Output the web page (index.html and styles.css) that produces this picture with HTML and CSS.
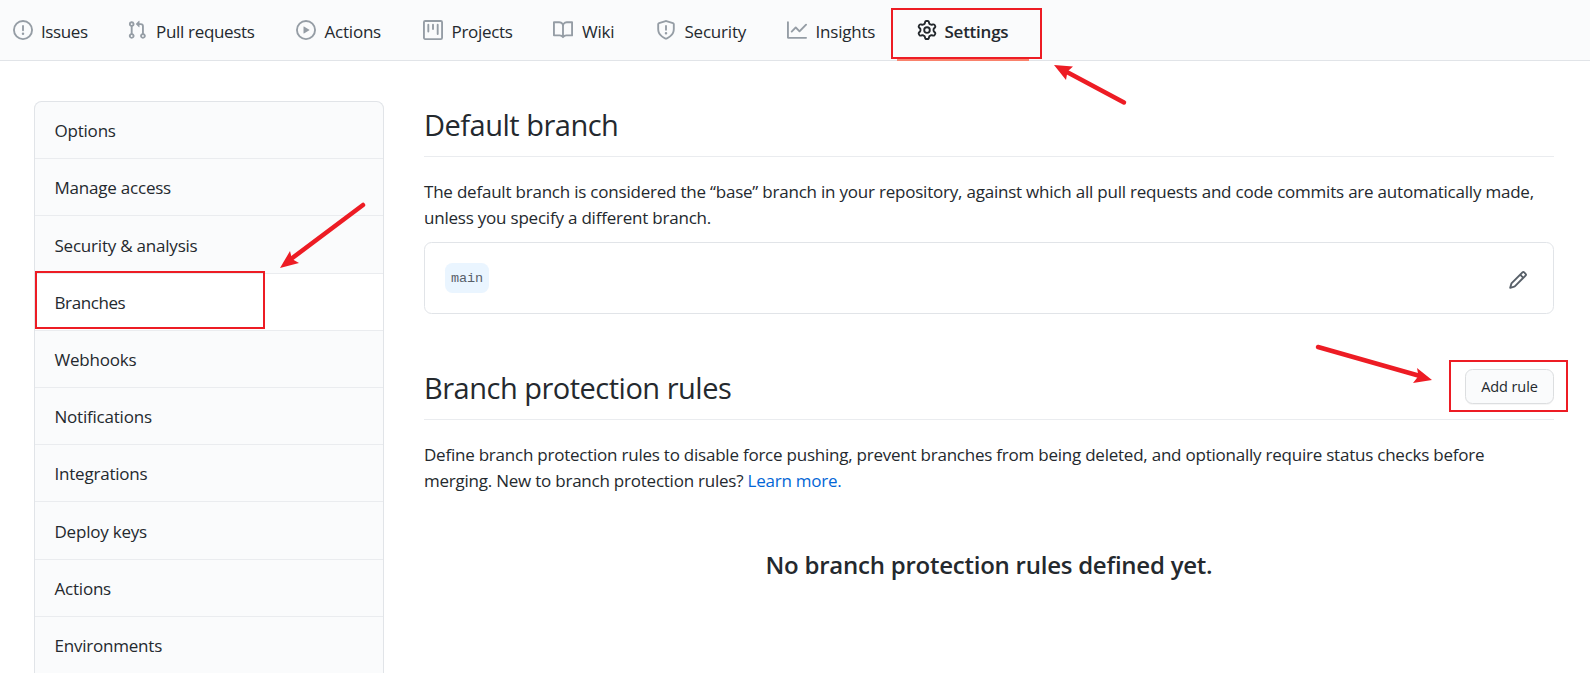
FILE: index.html
```html
<!DOCTYPE html>
<html lang="en">
<head>
<meta charset="utf-8">
<title>Branches settings</title>
<link rel="stylesheet" href="styles.css">
</head>
<body>
<nav class="tabs">
  <a class="tab tab-issues"><svg class="icon" viewBox="0 0 16 16"><path fill-rule="evenodd" d="M8 1.5a6.5 6.5 0 100 13 6.5 6.5 0 000-13zM0 8a8 8 0 1116 0A8 8 0 010 8zm9 3a1 1 0 11-2 0 1 1 0 012 0zm-.25-6.25a.75.75 0 00-1.5 0v3.5a.75.75 0 001.5 0v-3.5z"/></svg><span>Issues</span></a>
  <a class="tab tab-pulls"><svg class="icon" viewBox="0 0 16 16"><path fill-rule="evenodd" d="M7.177 3.073L9.573.677A.25.25 0 0110 .854v4.792a.25.25 0 01-.427.177L7.177 3.427a.25.25 0 010-.354zM3.75 2.5a.75.75 0 100 1.5.75.75 0 000-1.5zm-2.25.75a2.25 2.25 0 113 2.122v5.256a2.251 2.251 0 11-1.5 0V5.372A2.25 2.25 0 011.5 3.25zM11 2.5h-1V4h1a1 1 0 011 1v5.628a2.251 2.251 0 101.5 0V5A2.5 2.5 0 0011 2.5zm1 10.25a.75.75 0 111.5 0 .75.75 0 01-1.5 0zM3.75 12a.75.75 0 100 1.5.75.75 0 000-1.5z"/></svg><span>Pull requests</span></a>
  <a class="tab tab-actions"><svg class="icon" viewBox="0 0 16 16"><path fill-rule="evenodd" d="M1.5 8a6.5 6.5 0 1113 0 6.5 6.5 0 01-13 0zM8 0a8 8 0 100 16A8 8 0 008 0zM6.379 5.227A.25.25 0 006 5.442v5.117a.25.25 0 00.379.214l4.264-2.559a.25.25 0 000-.428L6.379 5.227z"/></svg><span>Actions</span></a>
  <a class="tab tab-projects"><svg class="icon" viewBox="0 0 16 16"><path fill-rule="evenodd" d="M1.75 0A1.75 1.75 0 000 1.75v12.5C0 15.216.784 16 1.75 16h12.5A1.75 1.75 0 0016 14.25V1.75A1.75 1.75 0 0014.25 0H1.75zM1.5 1.75a.25.25 0 01.25-.25h12.5a.25.25 0 01.25.25v12.5a.25.25 0 01-.25.25H1.75a.25.25 0 01-.25-.25V1.75zM11.75 3a.75.75 0 00-.75.75v7.5a.75.75 0 001.5 0v-7.5a.75.75 0 00-.75-.75zm-8.25.75a.75.75 0 011.5 0v5.5a.75.75 0 01-1.5 0v-5.5zM8 3a.75.75 0 00-.75.75v3.5a.75.75 0 001.5 0v-3.5A.75.75 0 008 3z"/></svg><span>Projects</span></a>
  <a class="tab tab-wiki"><svg class="icon" viewBox="0 0 16 16"><path fill-rule="evenodd" d="M0 1.75A.75.75 0 01.75 1h4.253c1.227 0 2.317.59 3 1.501A3.744 3.744 0 0111.006 1h4.245a.75.75 0 01.75.75v10.5a.75.75 0 01-.75.75h-4.507a2.25 2.25 0 00-1.591.659l-.622.621a.75.75 0 01-1.06 0l-.622-.621A2.25 2.25 0 005.258 13H.75a.75.75 0 01-.75-.75V1.75zm8.755 3a2.25 2.25 0 012.25-2.25H14.5v9h-3.757c-.71 0-1.4.201-1.992.572l.004-7.322zm-1.504 7.324l.004-5.073-.002-2.253A2.25 2.25 0 005.003 2.5H1.5v9h3.757a3.75 3.75 0 011.994.574z"/></svg><span>Wiki</span></a>
  <a class="tab tab-security"><svg class="icon" viewBox="0 0 16 16"><path fill-rule="evenodd" d="M7.467.133a1.75 1.75 0 011.066 0l5.25 1.68A1.75 1.75 0 0115 3.48V7c0 1.566-.32 3.182-1.303 4.682-.983 1.498-2.585 2.813-5.032 3.855a1.7 1.7 0 01-1.33 0c-2.447-1.042-4.049-2.357-5.032-3.855C1.32 10.182 1 8.566 1 7V3.48a1.75 1.75 0 011.217-1.667l5.25-1.68zm.61 1.429a.25.25 0 00-.153 0l-5.25 1.68a.25.25 0 00-.174.238V7c0 1.358.275 2.666 1.057 3.86.784 1.194 2.121 2.34 4.366 3.297a.2.2 0 00.154 0c2.245-.956 3.582-2.104 4.366-3.298C13.225 9.666 13.5 8.36 13.5 7V3.48a.25.25 0 00-.174-.237l-5.25-1.68zM9 10.5a1 1 0 11-2 0 1 1 0 012 0zm-.25-5.75a.75.75 0 10-1.5 0v3a.75.75 0 001.5 0v-3z"/></svg><span>Security</span></a>
  <a class="tab tab-insights"><svg class="icon" viewBox="0 0 16 16"><path fill-rule="evenodd" d="M1.5 1.75a.75.75 0 00-1.5 0v12.5c0 .414.336.75.75.75h14.5a.75.75 0 000-1.5H1.5V1.75zm14.28 2.53a.75.75 0 00-1.06-1.06L10 7.94 7.53 5.47a.75.75 0 00-1.06 0L3.22 8.72a.75.75 0 001.06 1.06L7 7.06l2.47 2.47a.75.75 0 001.06 0l5.25-5.25z"/></svg><span>Insights</span></a>
  <a class="tab tab-settings"><svg class="icon" viewBox="0 0 16 16"><path fill-rule="evenodd" d="M7.429 1.525a6.593 6.593 0 011.142 0c.036.003.108.036.137.146l.289 1.105c.147.56.55.967.997 1.189.174.086.341.183.501.29.417.278.97.423 1.53.27l1.102-.303c.11-.03.175.016.195.046.219.31.41.641.573.989.014.031.022.11-.059.19l-.815.806c-.411.406-.562.957-.53 1.456a4.588 4.588 0 010 .582c-.032.499.119 1.05.53 1.456l.815.806c.08.08.073.159.059.19a6.494 6.494 0 01-.573.99c-.02.029-.086.074-.195.045l-1.103-.303c-.559-.153-1.112-.008-1.529.27-.16.107-.327.204-.5.29-.449.222-.851.628-.998 1.189l-.289 1.105c-.029.11-.101.143-.137.146a6.613 6.613 0 01-1.142 0c-.036-.003-.108-.037-.137-.146l-.289-1.105c-.147-.56-.55-.967-.997-1.189a4.502 4.502 0 01-.501-.29c-.417-.278-.97-.423-1.53-.27l-1.102.303c-.11.03-.175-.016-.195-.046a6.492 6.492 0 01-.573-.989c-.014-.031-.022-.11.059-.19l.815-.806c.411-.406.562-.957.53-1.456a4.587 4.587 0 010-.582c.032-.499-.119-1.05-.53-1.456l-.815-.806c-.08-.08-.073-.159-.059-.19a6.44 6.44 0 01.573-.99c.02-.029.086-.075.195-.045l1.103.303c.559.153 1.112.008 1.529-.27.16-.107.327-.204.5-.29.449-.222.851-.628.998-1.189l.289-1.105c.029-.11.101-.143.137-.146zM8 0c-.236 0-.47.01-.701.03-.743.065-1.29.615-1.458 1.261l-.29 1.106c-.017.066-.078.158-.211.224a5.994 5.994 0 00-.668.386c-.123.082-.233.09-.3.071L3.27 2.776c-.644-.177-1.392.02-1.82.63a7.977 7.977 0 00-.704 1.217c-.315.675-.111 1.422.363 1.891l.815.806c.05.048.098.147.088.294a6.084 6.084 0 000 .772c.01.147-.038.246-.088.294l-.815.806c-.474.469-.678 1.216-.363 1.891.2.428.436.835.704 1.218.428.609 1.176.806 1.82.63l1.103-.303c.066-.019.176-.011.299.071.213.143.436.272.668.386.133.066.194.158.212.224l.289 1.106c.169.646.715 1.196 1.458 1.26a8.094 8.094 0 001.402 0c.743-.064 1.29-.614 1.458-1.26l.29-1.106c.017-.066.078-.158.211-.224a5.98 5.98 0 00.668-.386c.123-.082.233-.09.3-.071l1.102.302c.644.177 1.392-.02 1.82-.63.268-.382.505-.789.704-1.217.315-.675.111-1.422-.364-1.891l-.814-.806c-.05-.048-.098-.147-.088-.294a6.1 6.1 0 000-.772c-.01-.147.039-.246.088-.294l.814-.806c.475-.469.679-1.216.364-1.891a7.992 7.992 0 00-.704-1.218c-.428-.609-1.176-.806-1.82-.63l-1.103.303c-.066.019-.176.011-.299-.071a5.991 5.991 0 00-.668-.386c-.133-.066-.194-.158-.212-.224L10.16 1.29C9.99.645 9.444.095 8.701.031A8.094 8.094 0 008 0zm1.5 8a1.5 1.5 0 11-3 0 1.5 1.5 0 013 0zM11 8a3 3 0 11-6 0 3 3 0 016 0z"/></svg><span>Settings</span></a>
</nav>

<div class="layout">
  <aside class="menu">
    <a class="menu-item">Options</a>
    <a class="menu-item">Manage access</a>
    <a class="menu-item">Security &amp; analysis</a>
    <a class="menu-item menu-item-current">Branches</a>
    <a class="menu-item">Webhooks</a>
    <a class="menu-item">Notifications</a>
    <a class="menu-item">Integrations</a>
    <a class="menu-item">Deploy keys</a>
    <a class="menu-item">Actions</a>
    <a class="menu-item">Environments</a>
  </aside>

  <main class="content">
    <header class="subhead"><h2 class="title">Default branch</h2></header>
    <p class="text">The default branch is considered the “base” branch in your repository, against which all pull requests and code commits are automatically made,<br>unless you specify a different branch.</p>
    <div class="branch-box">
      <span class="branch-name">main</span>
      <svg class="icon pencil" viewBox="0 0 16 16"><path fill-rule="evenodd" d="M11.013 1.427a1.75 1.75 0 012.474 0l1.086 1.086a1.75 1.75 0 010 2.474l-8.61 8.61c-.21.21-.47.364-.756.445l-3.251.93a.75.75 0 01-.927-.928l.929-3.25a1.75 1.75 0 01.445-.758l8.61-8.61zm1.414 1.06a.25.25 0 00-.354 0L10.811 3.75l1.439 1.44 1.263-1.263a.25.25 0 000-.354l-1.086-1.086zM11.189 6.25L9.75 4.81l-6.286 6.287a.25.25 0 00-.064.108l-.558 1.953 1.953-.558a.249.249 0 00.108-.064l6.286-6.286z"/></svg>
    </div>

    <header class="subhead subhead-rules">
      <h2 class="title">Branch protection rules</h2>
      <button class="button">Add rule</button>
    </header>
    <p class="text text-rules">Define branch protection rules to disable force pushing, prevent branches from being deleted, and optionally require status checks before<br>merging. New to branch protection rules? <a class="link">Learn more.</a></p>
    <h3 class="blank">No branch protection rules defined yet.</h3>
  </main>
</div>

<svg class="marks" viewBox="0 0 1590 673">
  <g class="mark-box">
    <rect x="892" y="9" width="149" height="49"/>
    <rect x="36" y="272" width="228" height="56"/>
    <rect x="1450" y="361" width="117" height="50"/>
  </g>
  <g class="mark-line">
    <path d="M1124 102.500L1065 71"/>
    <path d="M363 205L291 259"/>
    <path d="M1318 347L1420 376"/>
  </g>
  <g class="mark-head">
    <path d="M1054 65L1073 66.500L1067.500 71.500L1066 80Z"/>
    <path d="M280 268L290 251L292 259L299 263Z"/>
    <path d="M1432 380L1417 368L1418.500 376L1413 383Z"/>
  </g>
</svg>
</body>
</html>
```
FILE: styles.css
```css
* { box-sizing: border-box; }

body {
  margin: 0;
  height: 673px;
  overflow: hidden;
  background: #fff;
  color: #24292e;
  font: 17px/26px "Open Sans", "Noto Sans", sans-serif;
  letter-spacing: -0.215px;
}

h2, h3, p { margin: 0; }

.tabs {
  display: flex;
  height: 61px;
  background: #fafbfc;
  border-bottom: 1px solid #e1e4e8;
}

.tab {
  display: flex;
  flex: none;
  gap: 8.500px;
  height: 61px;
  padding: 20px 0 0 20px;
  white-space: nowrap;
}

.tab span { line-height: 24px; }

.icon {
  display: block;
  flex: none;
  width: 20px;
  height: 20px;
  fill: #959da5;
}

.tab-issues { width: 107px; padding-left: 13px; gap: 8px; letter-spacing: -0.4px; }
.tab-pulls { width: 169px; gap: 9px; letter-spacing: -0.32px; }
.tab-actions { width: 127px; }
.tab-projects { width: 129.500px; letter-spacing: -0.3px; }
.tab-wiki { width: 103px; gap: 9.500px; }
.tab-security { width: 131.500px; gap: 9px; }
.tab-insights { width: 130px; }
.tab-settings {
  width: 132px;
  gap: 7.500px;
  border-bottom: 2px solid #f9826c;
  font-weight: 600;
  letter-spacing: -0.25px;
}
.tab-settings .icon { fill: #24292e; }

.layout {
  display: flex;
  gap: 40px;
  height: 612px;
  padding: 40px 36px 0 34px;
}

.menu {
  flex: none;
  width: 350px;
  background: #fafbfc;
  border: 1px solid #e1e4e8;
  border-bottom: 0;
  border-radius: 7.500px 7.500px 0 0;
}

.menu-item {
  display: block;
  height: 57.200px;
  padding: 16.300px 20px 0 19.500px;
  line-height: 26px;
  border-bottom: 1px solid #eaecef;
}
.menu-item:first-child { border-radius: 6.500px 6.500px 0 0; }
.menu-item:last-child { height: 56px; border-bottom: 0; }
.menu-item-current { background: #fff; letter-spacing: -0.4px; }

.content { flex: 1; min-width: 0; }

.subhead {
  display: flex;
  justify-content: space-between;
  height: 56px;
  border-bottom: 1px solid #eaecef;
}

.title {
  font-size: 29px;
  font-weight: 400;
  line-height: 48px;
  letter-spacing: -0.5px;
}

.text { padding-top: 22px; white-space: nowrap; }
.text-rules { letter-spacing: -0.23px; }

.branch-box {
  display: flex;
  align-items: center;
  justify-content: space-between;
  height: 72px;
  margin-top: 11px;
  padding: 0 25px 0 20px;
  border: 1px solid #e1e4e8;
  border-radius: 7.500px;
}

.branch-name {
  height: 30px;
  padding: 1px 6px 0;
  border-radius: 7.500px;
  background: #eaf5ff;
  color: #586069;
  font: 13.500px/30px "Liberation Mono", monospace;
  letter-spacing: -0.1px;
}

.pencil { margin-top: 4px; fill: #586069; }

.subhead-rules { margin-top: 50px; }

.button {
  width: 89px;
  height: 35px;
  margin-top: 5px;
  padding: 1px 0 0;
  background: #fafbfc;
  border: 1px solid #dcdee0;
  border-radius: 7.500px;
  box-shadow: 0 1px 0 rgba(27, 31, 35, 0.04);
  color: #24292e;
  font: 14.500px/24px "Open Sans", sans-serif;
  letter-spacing: -0.1px;
}

.link { color: #0366d6; }

.blank {
  margin-top: 52px;
  font-size: 24px;
  font-weight: 600;
  line-height: 38px;
  letter-spacing: -0.24px;
  text-align: center;
}

/* Annotation overlay drawn above the page */
.marks {
  position: absolute;
  top: 0;
  left: 0;
  width: 1590px;
  height: 673px;
  pointer-events: none;
}
.mark-box { fill: none; stroke: #ed1c24; stroke-width: 2; }
.mark-line { stroke: #ed1c24; stroke-width: 4.500; stroke-linecap: round; }
.mark-head { fill: #ed1c24; }
```
